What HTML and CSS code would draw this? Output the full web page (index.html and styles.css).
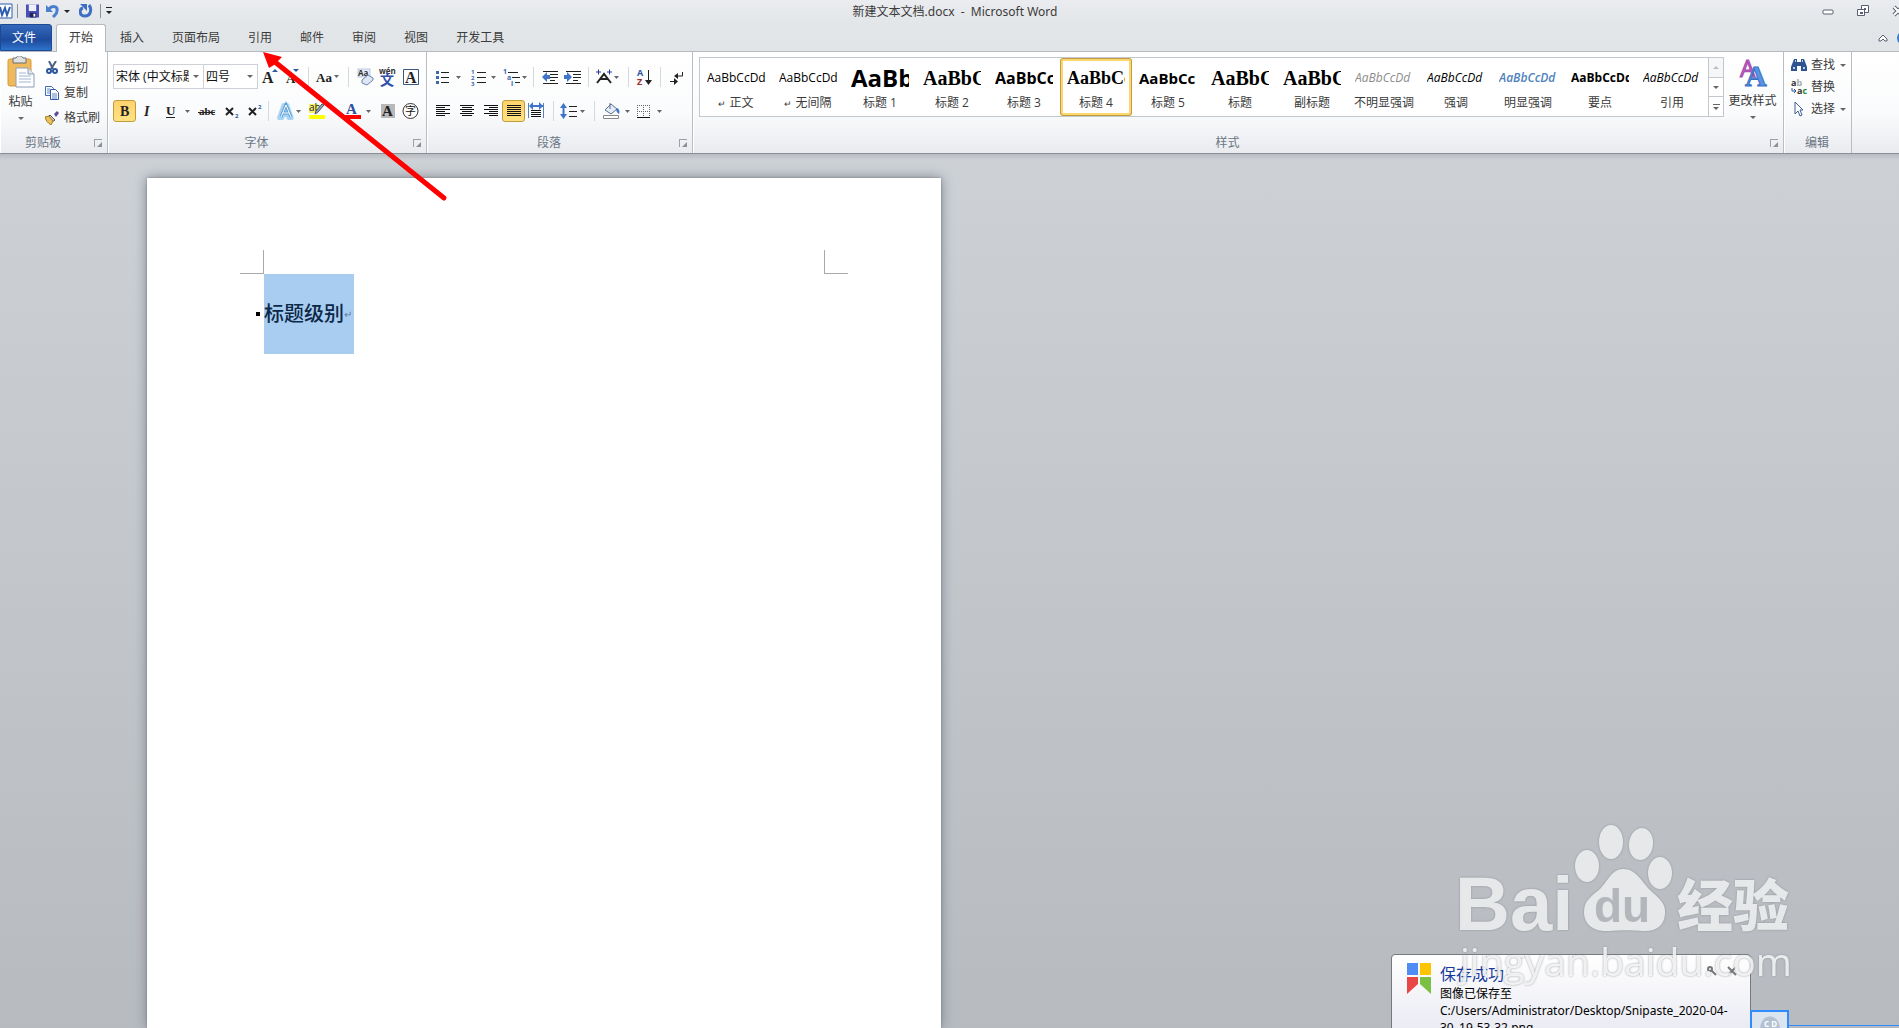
FILE: index.html
```html
<!DOCTYPE html>
<html lang="zh-CN">
<head>
    <meta charset="UTF-8">
    <meta name="viewport" content="width=device-width, initial-scale=1.0">
    <title>新建文本文档.docx - Microsoft Word</title>
    <link rel="stylesheet" href="styles.css">
</head>
<body>
    <header class="titlebar">
        <div class="quick">
            <svg width="13" height="16" viewBox="0 0 13 16"><path d="M-3 1h15v14H-3z" fill="#fff" stroke="#2a5db0"/><path d="M0 4l2 8 3-7 2 7 3-8" fill="none" stroke="#2a5db0" stroke-width="2"/></svg>
            <span class="line"></span>
            <button class="qbtn" aria-label="保存"><svg width="13" height="14" viewBox="0 0 14 14"><path d="M0 0h14v14H0z" fill="#4a4fb5"/><path d="M3 0h8v7H3z" fill="#eef1fb"/><path d="M4 9h7v5H4z" fill="#23265c"/><path d="M8 10h2v3H8z" fill="#fff"/></svg></button>
            <button class="qbtn" aria-label="撤消"><svg width="26" height="14" viewBox="0 0 26 14"><path d="M3 5c3-4 9-3 8 2 0 3-2 4-4 6" fill="none" stroke="#4a7fd0" stroke-width="3"/><path d="M0 1v7h7z" fill="#4a7fd0"/><path d="M18 6h6l-3 3z" fill="#222"/></svg></button>
            <button class="qbtn" aria-label="恢复"><svg width="14" height="14" viewBox="0 0 14 14"><path d="M10 1c3 4 2 11-4 11S0 5 4 4" fill="none" stroke="#3f6fc4" stroke-width="3"/><path d="M1 0h7v7z" fill="#3f6fc4"/></svg></button>
            <span class="line"></span>
            <button class="qbtn" aria-label="自定义"><svg width="8" height="8" viewBox="0 0 8 8"><path d="M1 0h6v1H1zM1 4h6L4 7z" fill="#222"/></svg></button>
        </div>
        <h1 class="title">新建文本文档.docx&nbsp; -&nbsp; Microsoft Word</h1>
        <div class="window-buttons">
            <button class="wbtn" aria-label="最小化"><svg width="12" height="12" viewBox="0 0 12 12"><rect x="1" y="5" width="10" height="4" rx="1" fill="#fff" stroke="#5a5f72"/></svg></button>
            <button class="wbtn" aria-label="还原"><svg width="12" height="12" viewBox="0 0 12 12"><path d="M4.500.500h7v7h-7z" fill="#fff" stroke="#5a5f72"/><path d="M.500 4.500h7v6h-7z" fill="#fff" stroke="#5a5f72"/><path d="M3 7h3v2H3zM7 3h2v2H7z" fill="#5a5f72"/></svg></button>
            <button class="wbtn" aria-label="关闭"><svg width="12" height="12" viewBox="0 0 12 12"><path d="M2 2l8 8M10 2l-8 8" stroke="#5a5f72" stroke-width="4"/><path d="M2 2l8 8M10 2l-8 8" stroke="#fff" stroke-width="2"/></svg></button>
        </div>
    </header>

    <nav class="tabs">
        <a href="#" class="tab file">文件</a>
        <a href="#" class="tab active">开始</a>
        <a href="#" class="tab">插入</a>
        <a href="#" class="tab">页面布局</a>
        <a href="#" class="tab">引用</a>
        <a href="#" class="tab">邮件</a>
        <a href="#" class="tab">审阅</a>
        <a href="#" class="tab">视图</a>
        <a href="#" class="tab">开发工具</a>
        <div class="help">
            <button class="hbtn" aria-label="折叠功能区"><svg width="10" height="10" viewBox="0 0 10 10"><path d="M1 6l4-4 4 4v2H7L5 6 3 8H1z" fill="#fff" stroke="#5a5f72"/></svg></button>
            <button class="hbtn" aria-label="帮助"><svg width="14" height="14" viewBox="0 0 14 14"><circle cx="7" cy="7" r="7" fill="#3a78cc"/></svg></button>
        </div>
    </nav>

    <main class="ribbon">
        <section class="group">
            <div class="group-body clipboard">
                <button class="big">
                    <svg width="28" height="32" viewBox="0 0 28 32"><rect x="1" y="3" width="23" height="27" rx="2" fill="#efb95c" stroke="#d59a3c"/><path d="M6 2h3c1-3 6-3 7 0h3v5H6z" fill="#dfe0e2" stroke="#6c6c70"/><path d="M9 12h12l6 6v13H9z" fill="#fff" stroke="#8d9cb5"/><path d="M21 12v6h6" fill="#dde6f3" stroke="#8d9cb5"/><path d="M12 17h7M12 20h12M12 23h12M12 26h12" stroke="#9fb4d4"/></svg>
                    <span>粘贴</span>
                    <i class="arrow"></i>
                </button>
                <div class="stack wide">
                    <button class="small"><svg width="14" height="14" viewBox="0 0 14 14"><path d="M4 0l4 8M11 0L6 8" stroke="#4b5f85" stroke-width="2"/><circle cx="4" cy="10" r="2" fill="none" stroke="#2c57a0" stroke-width="2"/><circle cx="10" cy="10" r="2" fill="none" stroke="#2c57a0" stroke-width="2"/></svg>剪切</button>
                    <button class="small"><svg width="14" height="14" viewBox="0 0 14 14"><path d="M.5.500h6l2 2v7h-8z" fill="#fff" stroke="#3e6bb4"/><path d="M5.500 3.500h5l3 3v7h-8z" fill="#fff" stroke="#2f5aa8"/><path d="M2 3h3M2 5h3M2 7h3M7 8h5M7 10h5M7 12h5" stroke="#5c86c8"/></svg>复制</button>
                    <button class="small"><svg width="14" height="14" viewBox="0 0 14 14"><path d="M9 3l3-3 2 2-3 4z" fill="#5b4a9a"/><path d="M5 4l5 5-3 2-4-5z" fill="#c9cdd6" stroke="#555"/><path d="M0 6l4-1 4 5-2 4C3 12 1 10 0 6z" fill="#e9c158" stroke="#a47b22"/></svg>格式刷</button>
                </div>
            </div>
            <footer class="group-label"><span>剪贴板</span><i class="launcher"></i></footer>
        </section>

        <section class="group">
            <div class="group-body tools">
                <div class="tool-row">
                    <label class="combo font-name"><select aria-label="字体"><option>宋体 (中文标题)</option></select></label>
                    <label class="combo font-size"><select aria-label="字号"><option>四号</option></select></label>
                    <button class="tool" aria-label="增大字体"><svg width="23" height="22"><text x="4" y="17" class="ico-serif" font-size="16">A</text><path d="M14 6l3-3 3 3z" fill="#2c57a0"/></svg></button>
                    <button class="tool" aria-label="缩小字体"><svg width="23" height="22"><text x="5" y="17" class="ico-serif" font-size="13">A</text><path d="M12 3h6l-3 3z" fill="#2c57a0"/></svg></button>
                    <span class="sep"></span>
                    <button class="tool" aria-label="更改大小写"><svg width="31" height="22"><text x="3" y="16" class="ico-serif" font-size="13">Aa</text><path d="M21 9h5l-2.500 3z" fill="#666"/></svg></button>
                    <span class="sep"></span>
                    <button class="tool" aria-label="清除格式"><svg width="23" height="22"><rect x="5" y="3" width="12" height="8" fill="#e6edf8" stroke="#b9c8e0"/><text x="5" y="10" font-size="8" font-weight="bold" fill="#333">Aa</text><path d="M9 14l6-5 5 3v2l-6 5-5-2z" fill="#dfe7f4" stroke="#6b83ad"/></svg></button>
                    <button class="tool" aria-label="拼音指南"><svg width="23" height="22"><text x="3" y="8" font-size="8" font-weight="bold" fill="#333">wén</text><text x="4" y="19" font-size="14" font-weight="bold" fill="#2f4fa8">文</text></svg></button>
                    <button class="tool" aria-label="字符边框"><svg width="23" height="22"><path d="M4.500 3.500h15v15h-15z" fill="#fff" stroke="#3d5878"/><text x="6" y="17" class="ico-serif" font-size="16">A</text></svg></button>
                </div>
                <div class="tool-row">
                    <button class="tool pressed" aria-label="加粗"><svg width="21" height="20"><text x="6" y="15" class="ico-serif" font-size="14">B</text></svg></button>
                    <button class="tool" aria-label="倾斜"><svg width="23" height="22"><text x="8" y="16" class="ico-serif" font-size="14" font-style="italic">I</text></svg></button>
                    <button class="tool" aria-label="下划线"><svg width="36" height="22"><text x="7" y="15" class="ico-serif" font-size="13">U</text><path d="M7 17.500h9" stroke="#222"/><path d="M26 10h5l-2.500 3z" fill="#666"/></svg></button>
                    <button class="tool" aria-label="删除线"><svg width="23" height="22"><text x="4" y="15" class="ico-serif" font-size="11">abc</text><path d="M3 12.500h17" stroke="#222"/></svg></button>
                    <button class="tool" aria-label="下标"><svg width="23" height="22"><path d="M8 8l7 7M15 8l-7 7" stroke="#222" stroke-width="2"/><text x="17" y="18" font-size="6" font-weight="bold" fill="#2c57a0">2</text></svg></button>
                    <button class="tool" aria-label="上标"><svg width="23" height="22"><path d="M8 8l7 7M15 8l-7 7" stroke="#222" stroke-width="2"/><text x="17" y="9" font-size="6" font-weight="bold" fill="#2c57a0">2</text></svg></button>
                    <span class="sep"></span>
                    <button class="tool" aria-label="文本效果"><svg width="31" height="22"><text x="6" y="18" font-size="18" font-weight="bold" fill="#fff" stroke="#a6d4f3" stroke-width="4" stroke-linejoin="round">A</text><path d="M8 17l5-12 5 12M10 13h6" fill="none" stroke="#5c9cd6" stroke-width="3"/><path d="M8 17l5-12 5 12M10 13h6" fill="none" stroke="#fff"/><path d="M23 10h5l-2.500 3z" fill="#666"/></svg></button>
                    <button class="tool" aria-label="突出显示"><svg width="36" height="22"><path d="M5 4h9v9H5z" fill="#f4f06a"/><text x="5" y="11" font-size="10" fill="#222">ab</text><path d="M20 5l-6 7-3 2 1-3 6-7z" fill="#8fa7cf" stroke="#555"/><path d="M5 15h16v4H5z" fill="#ff0"/></svg></button>
                    <button class="tool" aria-label="字体颜色"><svg width="36" height="22"><text x="6" y="14" class="ico-serif blue" font-size="15">A</text><path d="M5 15h16v4H5z" fill="#f00"/><path d="M26 10h5l-2.500 3z" fill="#666"/></svg></button>
                    <button class="tool" aria-label="字符底纹"><svg width="23" height="22"><path d="M5 4h14v14H5z" fill="#b9b9b9"/><text x="6" y="16" class="ico-serif" font-size="15">A</text></svg></button>
                    <button class="tool" aria-label="带圈字符"><svg width="23" height="22"><circle cx="11.500" cy="11" r="7.500" fill="#fff" stroke="#333"/><text x="6" y="15" font-size="11" fill="#111">字</text></svg></button>
                </div>
            </div>
            <footer class="group-label"><span>字体</span><i class="launcher"></i></footer>
        </section>

        <section class="group">
            <div class="group-body tools">
                <div class="tool-row">
                    <button class="tool" aria-label="项目符号"><svg width="36" height="22"><path d="M4 5h3v3H4zM4 10h3v3H4zM4 15h3v3H4z" fill="#3e68ac"/><path d="M9 6.500h8M9 11.500h8M9 16.500h8" stroke="#222"/><path d="M24 10h5l-2.500 3z" fill="#666"/></svg></button>
                    <button class="tool" aria-label="编号"><svg width="35" height="22"><g font-size="6" font-weight="bold" fill="#3e68ac"><text x="3" y="8">1</text><text x="3" y="14">2</text><text x="3" y="20">3</text></g><path d="M9 6.500h9M9 11.500h9M9 16.500h9" stroke="#222"/><path d="M23 10h5l-2.500 3z" fill="#666"/></svg></button>
                    <button class="tool" aria-label="多级列表"><svg width="26" height="22"><g font-size="7" font-weight="bold" fill="#3e68ac"><text x="0" y="8">1</text><text x="4" y="14">a</text><text x="8" y="20">i</text></g><path d="M5 6.500h10M9 11.500h8M12 16.500h5" stroke="#222"/><path d="M19 10h5l-2.500 3z" fill="#666"/></svg></button>
                    <span class="sep"></span>
                    <button class="tool" aria-label="减少缩进"><svg width="23" height="22"><path d="M5 5.500h15M12 8.500h8M12 11.500h8M12 14.500h5M5 17.500h15" stroke="#222"/><path d="M12 9H9V6l-5 5 5 5v-3h3z" fill="#3f74c8"/></svg></button>
                    <button class="tool" aria-label="增加缩进"><svg width="23" height="22"><path d="M5 5.500h15M12 8.500h8M12 11.500h8M12 14.500h5M5 17.500h15" stroke="#222"/><path d="M3 9h3V6l5 5-5 5v-3H3z" fill="#3f74c8"/></svg></button>
                    <span class="sep"></span>
                    <button class="tool" aria-label="中文版式"><svg width="31" height="22"><path d="M4 17l7-9 7 9M7 13h8" fill="none" stroke="#222" stroke-width="2"/><path d="M3 6h5M5.500 3.500v5M14 6h5M16.500 3.500v5" stroke="#26399a"/><path d="M21 10h5l-2.500 3z" fill="#666"/></svg></button>
                    <span class="sep"></span>
                    <button class="tool" aria-label="排序"><svg width="23" height="22"><text x="4" y="10" font-size="9" font-weight="bold" fill="#2c57a0">A</text><text x="4" y="19" font-size="9" font-weight="bold" fill="#9b2e2e">Z</text><path d="M15.500 4v12" stroke="#222"/><path d="M12 14h7l-3.500 5z" fill="#222"/></svg></button>
                    <span class="sep"></span>
                    <button class="tool" aria-label="显示编辑标记"><svg width="23" height="22"><path d="M17.500 6v4H12M5 15.500h5" fill="none" stroke="#222"/><path d="M13 7v6L9 10zM9 12v7l4-3.500z" fill="#222"/></svg></button>
                </div>
                <div class="tool-row">
                    <button class="tool" aria-label="左对齐"><svg width="23" height="22"><path d="M4 5.500h14M4 7.500h9M4 9.500h14M4 11.500h9M4 13.500h14M4 15.500h9" stroke="#111"/></svg></button>
                    <button class="tool" aria-label="居中"><svg width="24" height="22"><path d="M5 5.500h14M7 7.500h10M5 9.500h14M7 11.500h10M5 13.500h14M7 15.500h10" stroke="#111"/></svg></button>
                    <button class="tool" aria-label="右对齐"><svg width="23" height="22"><path d="M5 5.500h14M10 7.500h9M5 9.500h14M10 11.500h9M5 13.500h14M10 15.500h9" stroke="#111"/></svg></button>
                    <button class="tool pressed" aria-label="两端对齐"><svg width="21" height="20"><path d="M4 4.500h14M4 6.500h14M4 8.500h14M4 10.500h14M4 12.500h14M4 14.500h14" stroke="#111"/></svg></button>
                    <button class="tool" aria-label="分散对齐"><svg width="24" height="22"><path d="M3.500 3v15M18.500 3v15" stroke="#5b7fb8"/><path d="M5 6h13" stroke="#3f74c8" stroke-width="2"/><path d="M8 2v8L4 6zM14 2v8l4-4z" fill="#3f74c8"/><path d="M6 10.500h10M6 12.500h10M6 14.500h10M6 16.500h10" stroke="#111"/></svg></button>
                    <span class="sep"></span>
                    <button class="tool" aria-label="行距"><svg width="32" height="22"><path d="M5.500 5v12" stroke="#3f74c8" stroke-width="2"/><path d="M2 8l3.500-5L9 8zM2 14l3.500 5L9 14z" fill="#3f74c8"/><path d="M11 6.500h8M11 11.500h8M11 16.500h8" stroke="#222"/><path d="M22 10h5l-2.500 3z" fill="#666"/></svg></button>
                    <span class="sep"></span>
                    <button class="tool" aria-label="底纹"><svg width="35" height="22"><path d="M6 10l6-6 6 5-6 5z" fill="#e4ecf8" stroke="#5d6f8e"/><path d="M11 3v6" stroke="#5d6f8e"/><path d="M17 8c3 0 4 3 3 6-2-1-3-3-3-6z" fill="#3f74c8"/><path d="M4.500 15.500h15v3h-15z" fill="#fff" stroke="#888"/><path d="M26 10h5l-2.500 3z" fill="#666"/></svg></button>
                    <button class="tool" aria-label="边框"><svg width="36" height="22"><path d="M3.500 5v12M15.500 5v12M9.500 5v12M3 5.500h13M3 11.500h13" stroke="#666" stroke-dasharray="1 1"/><path d="M3 17.500h13" stroke="#111"/><path d="M23 10h5l-2.500 3z" fill="#666"/></svg></button>
                </div>
            </div>
            <footer class="group-label"><span>段落</span><i class="launcher"></i></footer>
        </section>

        <section class="group">
            <div class="group-body styles">
                <div class="gallery">
                    <button class="style"><span class="sample">AaBbCcDd</span><span class="name"><small>↵</small> 正文</span></button>
                    <button class="style"><span class="sample">AaBbCcDd</span><span class="name"><small>↵</small> 无间隔</span></button>
                    <button class="style"><span class="sample h1">AaBb</span><span class="name">标题 1</span></button>
                    <button class="style"><span class="sample serif">AaBbC</span><span class="name">标题 2</span></button>
                    <button class="style"><span class="sample h3">AaBbCc</span><span class="name">标题 3</span></button>
                    <button class="style selected"><span class="sample h4">AaBbCc</span><span class="name">标题 4</span></button>
                    <button class="style"><span class="sample h5">AaBbCc</span><span class="name">标题 5</span></button>
                    <button class="style"><span class="sample serif">AaBbC</span><span class="name">标题</span></button>
                    <button class="style"><span class="sample serif">AaBbC</span><span class="name">副标题</span></button>
                    <button class="style"><span class="sample italic grey">AaBbCcDd</span><span class="name">不明显强调</span></button>
                    <button class="style"><span class="sample italic">AaBbCcDd</span><span class="name">强调</span></button>
                    <button class="style"><span class="sample italic accent">AaBbCcDd</span><span class="name">明显强调</span></button>
                    <button class="style"><span class="sample strong">AaBbCcDd</span><span class="name">要点</span></button>
                    <button class="style"><span class="sample italic">AaBbCcDd</span><span class="name">引用</span></button>
                    <div class="scroller">
                        <button aria-label="上一行" disabled><i class="arrow up"></i></button>
                        <button aria-label="下一行"><i class="arrow"></i></button>
                        <button aria-label="其他" class="more"><i class="arrow"></i></button>
                    </div>
                </div>
                <button class="big change">
                    <svg width="32" height="32" viewBox="0 0 32 32"><text x="3" y="20" font-size="24" fill="#c462c4" stroke="#a548ae">A</text><text x="8" y="29" font-family="Liberation Serif" font-size="30" font-weight="bold" fill="#5b93e0" stroke="#3a70c4">A</text></svg>
                    <span>更改样式</span>
                    <i class="arrow"></i>
                </button>
            </div>
            <footer class="group-label"><span>样式</span><i class="launcher"></i></footer>
        </section>

        <section class="group">
            <div class="group-body">
                <div class="stack">
                    <button class="small"><svg width="16" height="14" viewBox="0 0 16 14"><path d="M3 1h3v3h4V1h3l3 8v4h-6V8H6v5H0V9z" fill="#2f5291"/><path d="M2 10h2M12 10h2M4 3h1M11 3h1" stroke="#b8d0f2" stroke-width="2"/></svg>查找<i class="arrow"></i></button>
                    <button class="small"><svg width="16" height="16" viewBox="0 0 16 16"><text x="0" y="7" font-size="9" font-weight="bold" fill="#333">a<tspan fill="#aaa">b</tspan></text><text x="6" y="15" font-size="9" font-weight="bold" fill="#333">a<tspan fill="#1f8a32">c</tspan></text><path d="M1 9v3h4M3 10l2 2-2 2" fill="none" stroke="#2c57a0"/></svg>替换</button>
                    <button class="small"><svg width="16" height="16" viewBox="0 0 16 16"><path d="M4 1l8 8H9l2 5-2 1-2-5-3 3z" fill="#fff" stroke="#3f5f92"/></svg>选择<i class="arrow"></i></button>
                </div>
            </div>
            <footer class="group-label last"><span>编辑</span></footer>
        </section>
    </main>

    <div class="workspace">
        <article class="page">
            <div class="crops"><i class="crop left"></i><i class="crop right"></i></div>
            <h4 class="heading">标题级别<small>↵</small></h4>
        </article>

        <svg class="pointer" width="190" height="156" viewBox="0 0 190 156"><path d="M181 146L12 10" stroke="#f00" stroke-width="5" stroke-linecap="round"/><path d="M0 0l19 5-5 5-3 3-5 3z" fill="#f00"/></svg>

        <aside class="toast">
            <svg width="24" height="32" viewBox="0 0 24 32"><path d="M0 0h11v12H0z" fill="#4f8df5"/><path d="M13 0h11v12H13z" fill="#fdc500"/><path d="M0 14h11v7L0 31z" fill="#e84545"/><path d="M13 14h11v17L13 21z" fill="#7ac143"/></svg>
            <div class="toast-text">
                <h2>保存成功</h2>
                <p>图像已保存至</p>
                <p>C:/Users/Administrator/Desktop/Snipaste_2020-04-30_19-53-32.png</p>
            </div>
            <div class="toast-buttons">
                <button aria-label="设置"><svg width="10" height="10" viewBox="0 0 10 10"><circle cx="3" cy="3" r="2" fill="none" stroke="#777" stroke-width="2"/><path d="M4 4l5 5" stroke="#777" stroke-width="2"/></svg></button>
                <button aria-label="关闭通知"><svg width="10" height="10" viewBox="0 0 10 10"><path d="M1 1l8 8M9 1L1 9" stroke="#777" stroke-width="2"/></svg></button>
            </div>
        </aside>
        <div class="snip-box"><svg width="20" height="14" viewBox="0 0 20 14"><path d="M0 14C0-4 20-4 20 14z" fill="#b4c1d2"/><text x="4" y="11" font-size="8" font-weight="bold" fill="#fff">C D</text></svg></div>
        <div class="snip-line"></div>

        <svg class="watermark" width="350" height="172" viewBox="0 0 350 172">
            <g fill="#f0f1f2" fill-opacity="0.9">
                <text x="5" y="111" class="wm-latin" font-size="76">Bai</text>
                <ellipse cx="137" cy="47" rx="12" ry="16"/>
                <ellipse cx="161" cy="23" rx="12" ry="17"/>
                <ellipse cx="191" cy="25" rx="12" ry="16" transform="rotate(8 191 25)"/>
                <ellipse cx="210" cy="54" rx="12" ry="16"/>
                <path d="M173 50c14 0 19 14 29 23 8 7 14 12 13 22-1 13-11 18-22 17-8-1-26-1-34 0-13 1-25-5-25-19 0-12 8-16 16-23 8-8 12-20 23-20z"/>
                <text x="227" y="107" class="wm-cjk" font-size="56">经验</text>
            </g>
            <text x="144" y="103" class="wm-latin" font-size="46" fill="#b3b7bc">du</text>
            <text x="10" y="157" class="wm-url" font-size="39">jingyan.baidu.com</text>
        </svg>
    </div>
</body>
</html>
```
FILE: styles.css
```css
*{
    box-sizing: border-box;
    margin: 0;
    padding: 0;
}
body{
    height: 100vh;
    display: flex;
    flex-direction: column;
    overflow: hidden;
    background-color: #e1e5e8;
    color: #3b3b3b;
    font-family: "Open Sans", "Noto Sans CJK SC", sans-serif;
    font-size: 12px;
    line-height: 16px;
}
button{
    border: none;
    background: none;
    font: inherit;
    color: inherit;
    display: flex;
    align-items: center;
    justify-content: center;
    flex-shrink: 0;
}
a{
    color: inherit;
    text-decoration: none;
}
svg{
    display: block;
    flex-shrink: 0;
}

/* title bar */
.titlebar{
    height: 24px;
    display: flex;
    align-items: center;
    background: linear-gradient(#eaecef, #e3e6e9);
}
.quick{
    display: flex;
    align-items: center;
    width: 120px;
    padding-bottom: 2px;
}
.line{
    width: 1px;
    height: 14px;
    margin: 0 8px 0 4px;
    background-color: #8d929a;
    flex-shrink: 0;
}
.qbtn{
    margin-right: 7px;
}
.qbtn + .line{
    margin: 0 4px 0 0;
}
.title{
    flex: 1;
    font-family: "Noto Sans", "Noto Sans CJK SC", sans-serif;
    font-size: 12px;
    font-weight: 400;
    text-align: center;
    padding-right: 32px;
}
.window-buttons{
    display: flex;
    gap: 23px;
    width: 77px;
    padding-bottom: 2px;
}

/* tabs */
.tabs{
    height: 27px;
    display: flex;
    background: linear-gradient(#e3e6e9, #e0e4e7);
}
.tab{
    padding: 6px 14px 0;
}
.tab.file{
    margin-right: 4px;
    color: white;
    border-radius: 0 3px 0 0;
    background: linear-gradient(#3468bb, #1d4b9d 60%, #2f73cc);
    border: 1px solid #1c4a94;
    padding: 5px 15px 0 11px;
}
.tab.active{
    background-color: white;
    border: 1px solid #b6bac0;
    border-bottom: none;
    border-radius: 3px 3px 0 0;
    padding: 5px 12px 0;
    margin-bottom: -1px;
    z-index: 1;
}
.help{
    display: flex;
    gap: 9px;
    margin-left: auto;
    margin-right: -12px;
}

/* ribbon */
.ribbon{
    height: 103px;
    display: flex;
    border-top: 1px solid #b6bac0;
    border-bottom: 1px solid #8a9097;
    background: linear-gradient(white, #fafbfc 60%, #e9ebef);
}
.group{
    display: flex;
    flex-direction: column;
    border-right: 1px solid #b9bec5;
    box-shadow: inset 1px 0 white;
}
.group-body{
    flex: 1;
    display: flex;
}
.group-label{
    height: 20px;
    display: flex;
    align-items: center;
    color: #6b7684;
    padding: 0 5px 0 4px;
}
.group-label span{
    flex: 1;
    text-align: center;
    padding-right: 12px;
}
.group-label.last span{
    padding-right: 0;
}
.launcher{
    width: 8px;
    height: 8px;
    border: 1px solid #9aa0a8;
    border-width: 1px 0 0 1px;
    display: flex;
    align-items: flex-end;
    justify-content: flex-end;
}
.launcher::after{
    content: "";
    border: 3px solid #8a9098;
    border-width: 0 0 5px 5px;
    border-left-color: transparent;
}
.arrow{
    border: 3px solid transparent;
    border-top-color: #666;
    border-bottom: none;
}
.arrow.up{
    border-top: none;
    border-bottom: 3px solid #b9bdc2;
}
.big{
    flex-direction: column;
    justify-content: flex-start;
    padding-top: 4px;
    width: 41px;
}
.big span{
    margin: 6px 0 7px;
}
.clipboard{
    width: 107px;
}
.stack{
    display: flex;
    flex-direction: column;
    gap: 6px;
    padding: 5px 5px 0 7px;
}
.stack.wide{
    gap: 9px;
    padding: 8px 0 0 4px;
}
.small{
    gap: 4px;
    justify-content: flex-start;
    height: 16px;
}
.wide .small{
    gap: 5px;
}
.small .arrow{
    margin-left: 1px;
}

/* font and paragraph buttons */
.tools{
    flex-direction: column;
    gap: 9px;
    padding: 12px 4px 0 5px;
}
.tool-row{
    display: flex;
    align-items: center;
    height: 25px;
}
.tool{
    height: 22px;
}
.pressed{
    border: 1px solid #c29b3c;
    border-radius: 3px;
    background: linear-gradient(#fdd26c, #ffe282);
}
.sep{
    width: 1px;
    height: 20px;
    margin: 0 4px;
    background-color: #d5d8dd;
}
.combo{
    display: flex;
    align-items: center;
    height: 25px;
    border: 1px solid #ced2d8;
    background-color: white;
    padding-right: 4px;
}
.combo select{
    flex: 1;
    min-width: 0;
    appearance: none;
    border: none;
    background: none;
    font: inherit;
    color: #111;
    padding-left: 2px;
}
.combo::after{
    content: "";
    margin-left: 4px;
    border: 3px solid transparent;
    border-top-color: #666;
    border-bottom: none;
}
.font-name{
    width: 91px;
}
.font-size{
    width: 54px;
    border-left: none;
}
.ico-serif{
    font-family: "Liberation Serif", serif;
    font-weight: bold;
    fill: #222;
}
.ico-serif.blue{
    fill: #2f4fa0;
}

/* style gallery */
.styles{
    padding: 5px 2px 0 6px;
    align-items: flex-start;
}
.gallery{
    display: flex;
    height: 60px;
    border: 1px solid #c3c8ce;
    background-color: white;
}
.style{
    width: 72px;
    height: 58px;
    flex-direction: column;
    justify-content: flex-start;
    padding: 3px 7px;
}
.style.selected{
    padding: 0 4px;
    border: 3px solid #fbd772;
    outline: 1px solid #c29b3c;
    outline-offset: -1px;
    border-radius: 3px;
}
.sample{
    width: 58px;
    height: 34px;
    line-height: 34px;
    overflow: hidden;
    white-space: nowrap;
    text-align: left;
    color: black;
}
.sample.h1{
    font-size: 24px;
    font-weight: bold;
}
.sample.serif{
    font-family: "Liberation Serif", serif;
    font-size: 20px;
    font-weight: bold;
}
.sample.h3{
    font-size: 16px;
    font-weight: bold;
}
.sample.h4{
    font-family: "Liberation Serif", serif;
    font-size: 18px;
    font-weight: bold;
}
.sample.h5{
    font-size: 15px;
    font-weight: bold;
}
.sample.italic{
    font-style: italic;
}
.sample.grey{
    color: #8c8c8c;
}
.sample.accent{
    color: #4f81bd;
    font-weight: 600;
}
.sample.strong{
    font-weight: bold;
}
.name{
    white-space: nowrap;
}
.name small{
    font-size: 9px;
}
.scroller{
    width: 15px;
    display: flex;
    flex-direction: column;
    border-left: 1px solid #c3c8ce;
}
.scroller button{
    flex: 1;
    border-bottom: 1px solid #c3c8ce;
}
.scroller button:disabled{
    background-color: #f6f7f8;
}
.scroller .more{
    flex-direction: column;
    gap: 2px;
    border-bottom: none;
}
.more::before{
    content: "";
    width: 7px;
    height: 1px;
    background-color: #666;
}
.change{
    width: 57px;
    padding-top: 0;
}
.change span{
    margin-top: 4px;
}

/* document */
.workspace{
    flex: 1;
    position: relative;
    padding: 24px 0 0 147px;
    overflow: hidden;
    background: linear-gradient(#b8bcc1, #cdd1d6 6px, #b7bbc0);
}
.page{
    width: 794px;
    height: 100%;
    padding: 72px 93px 0;
    background-color: white;
    box-shadow: 0 0 2px #777d84, 0 0 12px #7d838a;
}
.crops{
    display: flex;
    justify-content: space-between;
}
.crop{
    width: 24px;
    height: 24px;
    border-bottom: 1px solid #a9a9a9;
}
.crop.left{
    border-right: 1px solid #a9a9a9;
}
.crop.right{
    border-left: 1px solid #a9a9a9;
}
.heading{
    display: flex;
    align-items: center;
    width: 90px;
    height: 80px;
    margin-left: 24px;
    background-color: #a9cdf1;
    color: #0b2848;
    font-size: 20px;
    font-weight: 500;
}
.heading::before{
    content: "";
    width: 4px;
    height: 4px;
    margin-left: -8px;
    margin-right: 4px;
    background-color: black;
}
.heading small{
    font-size: 10px;
    font-weight: 400;
    color: #5c7ca0;
}

/* things lying over the document */
.pointer{
    position: fixed;
    left: 263px;
    top: 52px;
}
.toast{
    position: absolute;
    right: 148px;
    bottom: -24px;
    width: 360px;
    height: 98px;
    display: flex;
    gap: 9px;
    padding: 8px 12px 0 15px;
    border: 1px solid #76797d;
    border-radius: 4px;
    background: linear-gradient(white, #e4e5f0);
    color: black;
    font-family: "Noto Sans", "Noto Sans CJK SC", sans-serif;
}
.toast-text{
    width: 304px;
    line-height: 17px;
}
.toast-text h2{
    font-size: 16px;
    font-weight: 400;
    line-height: 22px;
    color: #17399c;
}
.toast-buttons{
    position: absolute;
    top: 11px;
    right: 13px;
    display: flex;
    gap: 10px;
}
.snip-box{
    position: absolute;
    right: 110px;
    bottom: -20px;
    width: 39px;
    height: 38px;
    padding: 4px 8px;
    border: 2px solid #2f8cff;
    background-color: #dbe5f0;
}
.snip-line{
    position: absolute;
    right: 0;
    bottom: 2px;
    width: 110px;
    height: 1px;
    background-color: #2f8cff;
}
.watermark{
    position: absolute;
    right: 99px;
    bottom: 37px;
    filter: drop-shadow(0 0 1px #8b8f95);
    overflow: visible;
}
.wm-latin{
    font-family: "Liberation Sans", sans-serif;
    font-weight: bold;
}
.wm-cjk{
    font-weight: 900;
}
.wm-url{
    fill: #fff;
    fill-opacity: 0.8;
}
```
